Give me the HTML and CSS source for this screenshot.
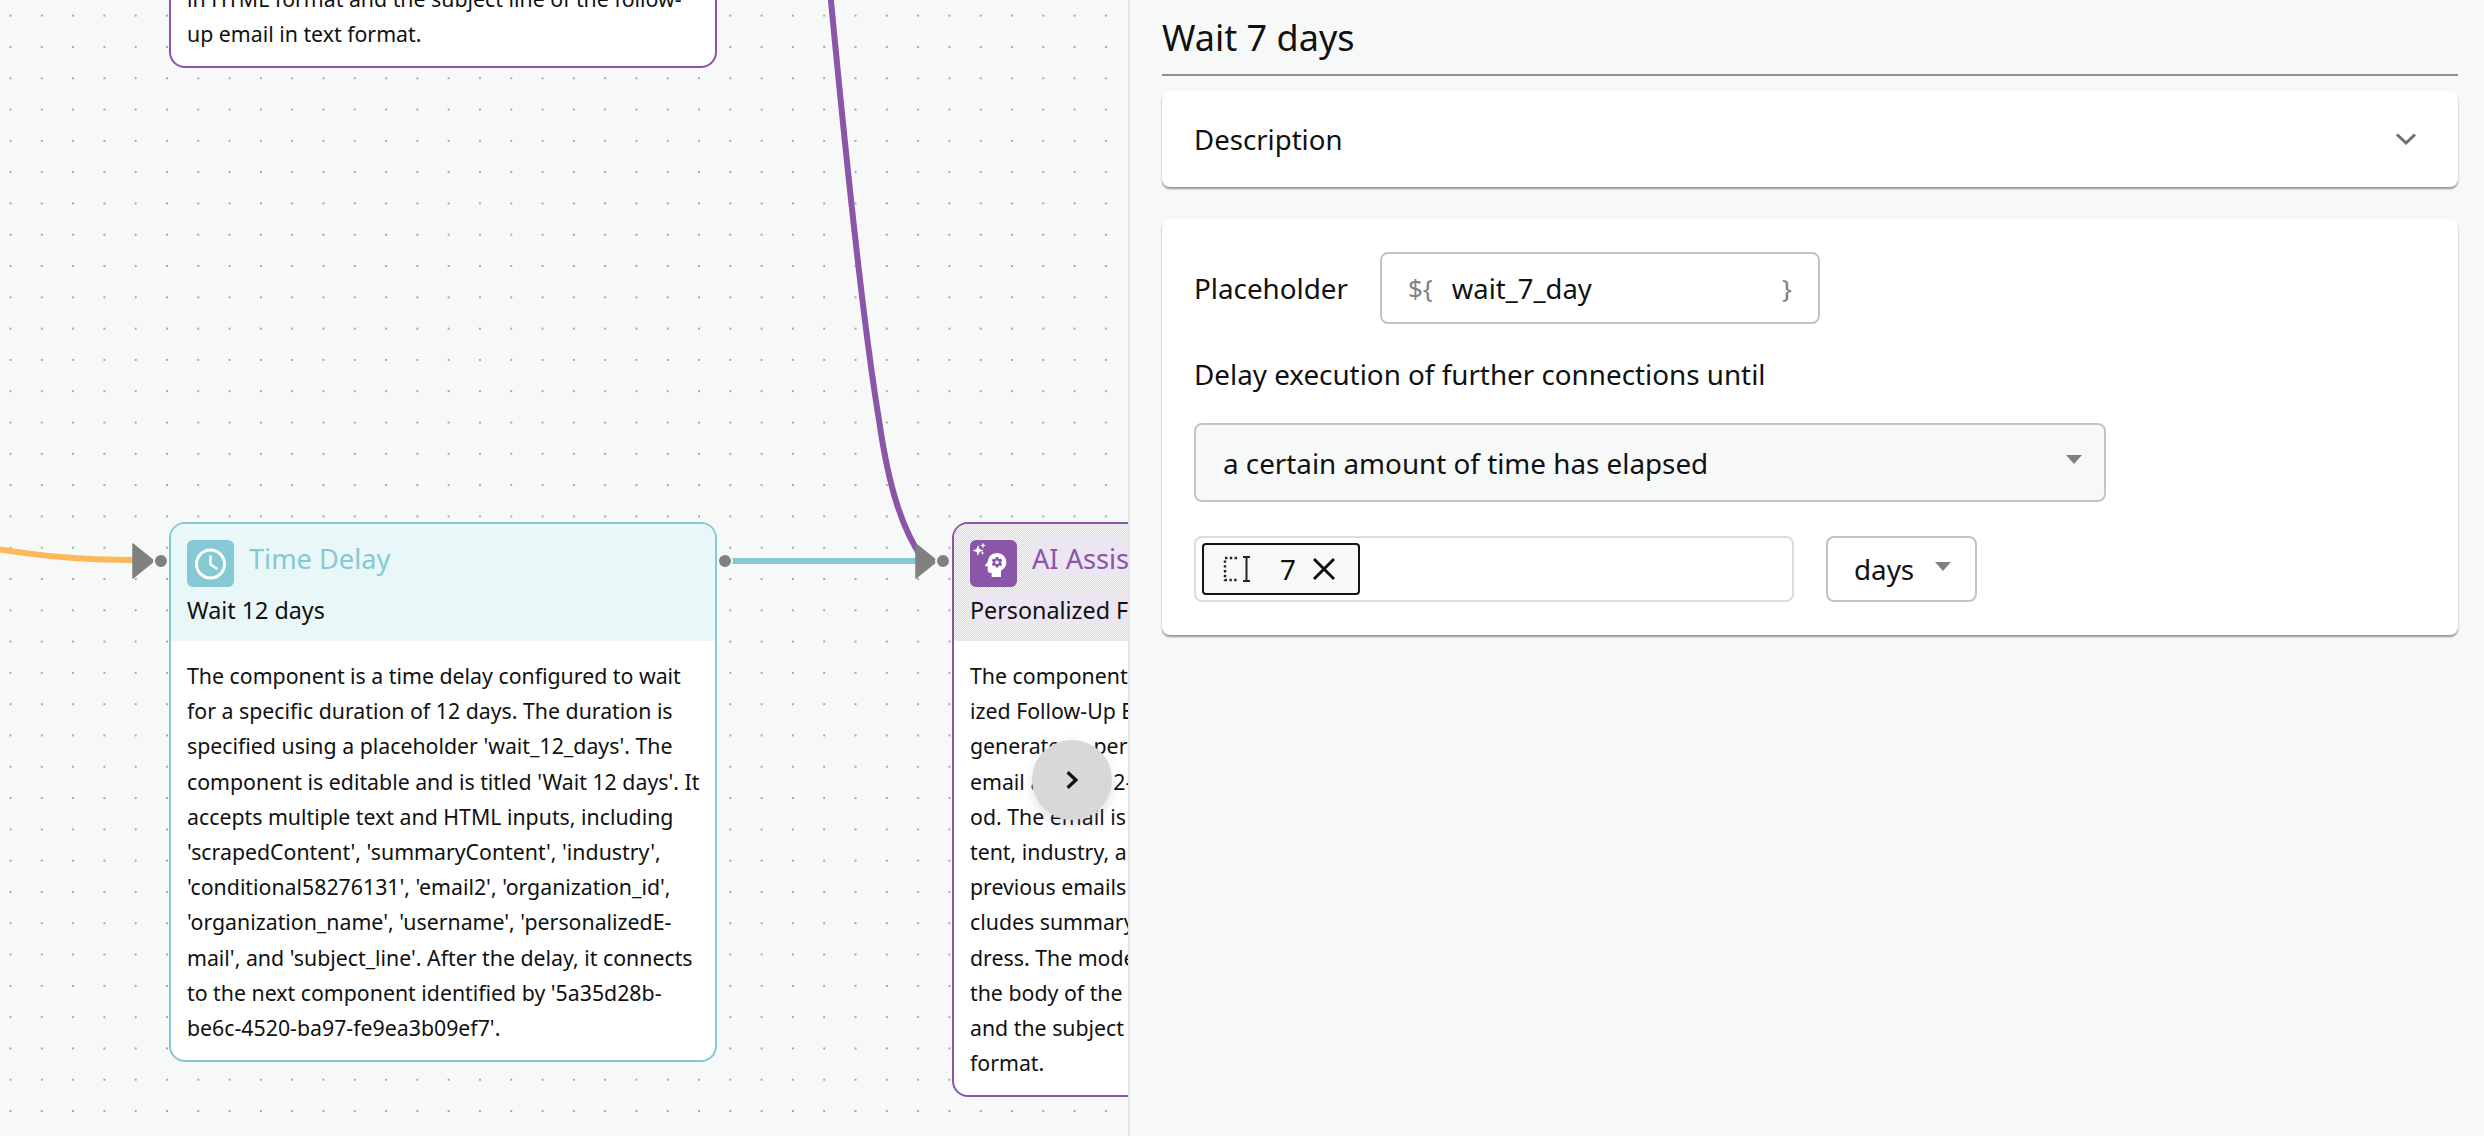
FILE: index.html
```html
<!DOCTYPE html>
<html>
<head>
    <title>Wait 7 days</title>
    <link rel="stylesheet" href="styles.css">
</head>
<body>
    <div class="canvas">
        <svg class="edges" width="1128" height="1136" viewBox="0 0 1128 1136">
            <path d="M-10 548 C 40 556, 80 560, 135 560" stroke="#fcb95c"/>
            <path d="M829 -20 C 846 160, 864 330, 879 420 C 889 490, 903 530, 922 558" stroke="#8b55a8"/>
            <path d="M731 561 L 920 561" stroke="#84c9d4"/>
            <path class="arrow" d="M133 544 L154 561 L133 578 Z"/>
            <path class="arrow" d="M916 544 L937 561 L916 578 Z"/>
            <circle class="port" cx="161" cy="561" r="7"/>
            <circle class="port" cx="725" cy="561" r="7"/>
            <circle class="port" cx="943" cy="561" r="7"/>
        </svg>

        <div class="node node-purple node-top">
            <div class="node-body">in HTML format and the subject line of the follow-up email in text format.</div>
        </div>

        <div class="node node-cyan node-delay">
            <div class="node-head">
                <div class="node-title">
                    <span class="node-icon">
                        <svg width="47" height="47" viewBox="0 0 47 47" fill="none" stroke="#fff">
                            <circle cx="23.5" cy="24" r="14" stroke-width="3"/>
                            <path d="M23.5 15.5 V24.5 L30.5 29" stroke-width="2.6"/>
                        </svg>
                    </span>
                    <span>Time Delay</span>
                </div>
                <div class="node-name">Wait 12 days</div>
            </div>
            <div class="node-body">The component is a time delay configured to wait for a specific duration of 12 days. The duration is specified using a placeholder 'wait_12_days'. The component is editable and is titled 'Wait 12 days'. It accepts multiple text and HTML inputs, including 'scrapedContent', 'summaryContent', 'industry', 'conditional58276131', 'email2', 'organization_id', 'organization_name', 'username', 'personalizedE&shy;mail', and 'subject_line'. After the delay, it connects to the next component identified by '5a35d28b-be6c-4520-ba97-fe9ea3b09ef7'.</div>
        </div>

        <div class="node node-purple node-ai">
            <div class="node-head">
                <div class="node-title">
                    <span class="node-icon">
                        <svg width="47" height="47" viewBox="0 0 47 47" fill="#fff">
                            <g transform="translate(9.7 9) scale(1.33)">
                                <path d="M13 8.57c-.79 0-1.43.64-1.43 1.43s.64 1.43 1.43 1.43 1.43-.64 1.43-1.43-.64-1.43-1.43-1.43z"/>
                                <path d="M13 3C9.25 3 6.2 5.94 6.02 9.64L4.1 12.2c-.25.33-.01.8.4.8H6v3c0 1.1.9 2 2 2h1v3h7v-4.68c2.36-1.12 4-3.53 4-6.32 0-3.87-3.13-7-7-7zm3 7c0 .13-.01.26-.02.39l.83.66c.08.06.1.16.05.25l-.8 1.39c-.05.09-.16.12-.24.09l-.99-.4c-.21.16-.43.29-.67.39L14 13.83c-.01.1-.1.17-.2.17h-1.6c-.1 0-.18-.07-.2-.17l-.15-1.06c-.25-.1-.47-.23-.68-.39l-.99.4c-.09.03-.2 0-.25-.09l-.8-1.39c-.05-.08-.03-.19.05-.25l.84-.66c-.01-.13-.02-.26-.02-.39s.02-.27.04-.39l-.85-.66c-.08-.06-.1-.16-.05-.26l.8-1.38c.05-.09.15-.12.24-.09l1 .4c.2-.15.43-.29.67-.39L12 6.17c.02-.1.1-.17.2-.17h1.6c.1 0 .18.07.2.17l.15 1.06c.24.1.46.23.67.39l1-.4c.09-.03.2 0 .24.09l.8 1.38c.05.09.03.2-.05.26l-.85.66c.03.12.04.25.04.39z"/>
                            </g>
                            <path d="M8 5 L9.5 9 L13.5 10.5 L9.5 12 L8 16 L6.5 12 L2.5 10.5 L6.5 9 Z"/>
                            <path d="M13 2.5 L13.8 4.7 L16 5.5 L13.8 6.3 L13 8.5 L12.2 6.3 L10 5.5 L12.2 4.7 Z"/>
                            <path d="M12.5 11 L13.1 12.4 L14.5 13 L13.1 13.6 L12.5 15 L11.9 13.6 L10.5 13 L11.9 12.4 Z"/>
                        </svg>
                    </span>
                    <span class="label-bg">AI Assistant</span>
                </div>
                <div class="node-name"><span class="label-bg">Personalized Follow-Up Email</span></div>
            </div>
            <div class="node-body lines">The component is a Personal-<br>ized Follow-Up Email that<br>generates a personalized<br>email after a 12-day peri-<br>od. The email is based on con-<br>tent, industry, and<br>previous emails and in-<br>cludes summary and ad-<br>dress. The model writes<br>the body of the email in HTML<br>and the subject line in text<br>format.</div>
        </div>

        <div class="next-btn">
            <svg width="22" height="22" viewBox="0 0 20 20" fill="none" stroke="#111" stroke-width="3">
                <path d="M6 3 L13.5 10 L6 17"/>
            </svg>
        </div>
    </div>

    <div class="panel">
        <h1 class="panel-title">Wait 7 days</h1>

        <div class="card card-desc">
            <span>Description</span>
            <svg width="24" height="24" viewBox="0 0 24 24" fill="none" stroke="#707070" stroke-width="3">
                <path d="M3 7.5 L12 16 L21 7.5"/>
            </svg>
        </div>

        <div class="card card-form">
            <div class="row">
                <span class="row-label">Placeholder</span>
                <div class="field">
                    <span class="brace">${</span>
                    <span class="field-value">wait_7_day</span>
                    <span class="brace">}</span>
                </div>
            </div>

            <div class="form-label">Delay execution of further connections until</div>

            <div class="select">
                <span>a certain amount of time has elapsed</span>
                <i class="caret"></i>
            </div>

            <div class="row row-time">
                <div class="chip-box">
                    <div class="chip">
                        <svg width="28" height="26" viewBox="0 0 28 26" fill="none" stroke="#222">
                            <path d="M14 2 H2 V24 H14" stroke-width="2.4" stroke-dasharray="2.4 2.4"/>
                            <path d="M20 1 H27 M23.5 1 V25 M20 25 H27" stroke-width="2"/>
                        </svg>
                        <span class="chip-value">7</span>
                        <svg width="24" height="24" viewBox="0 0 24 24" fill="none" stroke="#111" stroke-width="3">
                            <path d="M2 2 L22 22 M22 2 L2 22"/>
                        </svg>
                    </div>
                </div>
                <div class="unit">
                    <span>days</span>
                    <i class="caret"></i>
                </div>
            </div>
        </div>
    </div>
</body>
</html>
```

FILE: styles.css
```css
* {
    margin: 0;
    padding: 0;
    box-sizing: border-box;
}

html, body {
    height: 100%;
    overflow: hidden;
}

body {
    display: flex;
    background: #f7f9f8;
    color: #111;
    font-family: 'Noto Sans', sans-serif;
}

/* canvas */
.canvas {
    position: relative;
    flex: 0 0 1128px;
    height: 100vh;
    overflow: hidden;
    background-image: radial-gradient(circle at center, #a6a6a6 1px, transparent 1.4px);
    background-size: 31.3px 31.3px;
    background-position: -5.15px 0;
}

.edges {
    position: absolute;
    left: 0;
    top: 0;
    fill: none;
    stroke-width: 6;
}

.edges .arrow {
    fill: #808080;
    stroke: #808080;
    stroke-width: 1.5;
    stroke-linejoin: round;
}

.edges .port {
    fill: #808080;
    stroke: #f7f9f8;
    stroke-width: 2;
}

.node {
    position: absolute;
    width: 548px;
    background: #fff;
    border: 2px solid;
    border-radius: 16px;
    overflow: hidden;
}

.node-cyan { border-color: #84c9d4; }
.node-purple { border-color: #8b55a8; }

.node-top {
    left: 169px;
    top: -60px;
    height: 128px;
    display: flex;
    align-items: flex-end;
    border-top: none;
    border-radius: 0 0 16px 16px;
}

.node-delay {
    left: 169px;
    top: 522px;
    height: 540px;
}

.node-ai {
    left: 952px;
    top: 522px;
    height: 575px;
}

.node-head {
    height: 117px;
    padding: 16px 16px 0;
}

.node-cyan .node-head { background: #e9f7f8; }

.node-ai .node-head {
    background: repeating-conic-gradient(#dcdcdc 0 25%, #f6f6f6 0 50%) 0 0 / 2px 2px;
}

.node-title {
    display: flex;
    align-items: flex-start;
    gap: 15px;
    font-size: 27.2px;
    line-height: 38px;
}

.node-cyan .node-title { color: #84c9d4; }
.node-purple .node-title { color: #8b55a8; }

.node-icon {
    display: block;
    width: 47px;
    height: 47px;
    border-radius: 6px;
}

.node-cyan .node-icon { background: #84c9d4; }
.node-purple .node-icon { background: #8b55a8; }

.node-name {
    margin-top: 5px;
    font-size: 23.3px;
    line-height: 36px;
    white-space: nowrap;
}

.label-bg { background: #ebe6f1; }

.node-body {
    padding: 17px 12px 15px 16px;
    font-size: 21.3px;
    line-height: 35.2px;
}

.node-body.lines { white-space: nowrap; }

.next-btn {
    position: absolute;
    left: 1032px;
    top: 740px;
    width: 80px;
    height: 80px;
    display: flex;
    align-items: center;
    justify-content: center;
    border-radius: 50%;
    background: #d8d8d8;
    box-shadow: 0 5px 12px rgba(120, 100, 140, 0.2);
}

/* side panel */
.panel {
    flex: 1;
    padding: 0 26px 0 32px;
    border-left: 2px solid #e6e6e6;
}

.panel-title {
    height: 76px;
    padding-top: 13px;
    border-bottom: 2px solid #909090;
    font-size: 36px;
    line-height: 50px;
    font-weight: 400;
}

.card {
    background: #fff;
    border-radius: 8px;
    box-shadow: 0 2px 2px rgba(0, 0, 0, 0.4);
}

.card-desc {
    display: flex;
    align-items: center;
    justify-content: space-between;
    height: 96px;
    margin-top: 15px;
    padding: 0 40px 0 32px;
    font-size: 27.6px;
}

.card-form {
    height: 416px;
    margin-top: 32px;
    padding: 33px 32px 0;
    font-size: 27.8px;
}

.row {
    display: flex;
    align-items: center;
}

.row-label { width: 186px; }

.field {
    display: flex;
    align-items: center;
    width: 440px;
    height: 72px;
    padding: 0 26px;
    border: 2px solid #c4c4c4;
    border-radius: 8px;
}

.brace {
    color: #808080;
    font-size: 26px;
}

.field-value {
    flex: 1;
    margin-left: 19px;
    font-size: 27.4px;
}

.form-label {
    margin-top: 27px;
    line-height: 46px;
}

.select {
    display: flex;
    align-items: center;
    justify-content: space-between;
    width: 912px;
    height: 79px;
    margin-top: 26px;
    padding: 0 22px 0 27px;
    background: #f7f9f8;
    border: 2px solid #c4c4c4;
    border-radius: 8px;
}

.caret {
    display: block;
    margin-bottom: 6px;
    border-top: 9px solid #808080;
    border-left: 8px solid transparent;
    border-right: 8px solid transparent;
}

.row-time {
    gap: 32px;
    margin-top: 34px;
}

.chip-box {
    width: 600px;
    height: 66px;
    padding: 5px 6px;
    border: 2px solid #dcdcdc;
    border-radius: 8px;
}

.chip {
    display: flex;
    align-items: center;
    width: 158px;
    height: 52px;
    padding-left: 19px;
    background: #f7f9f8;
    border: 2px solid #151515;
    border-radius: 4px;
}

.chip-value {
    margin: 0 16px 0 29px;
}

.unit {
    display: flex;
    align-items: center;
    justify-content: space-between;
    width: 151px;
    height: 66px;
    padding: 0 24px 0 26px;
    border: 2px solid #c4c4c4;
    border-radius: 8px;
}
```
